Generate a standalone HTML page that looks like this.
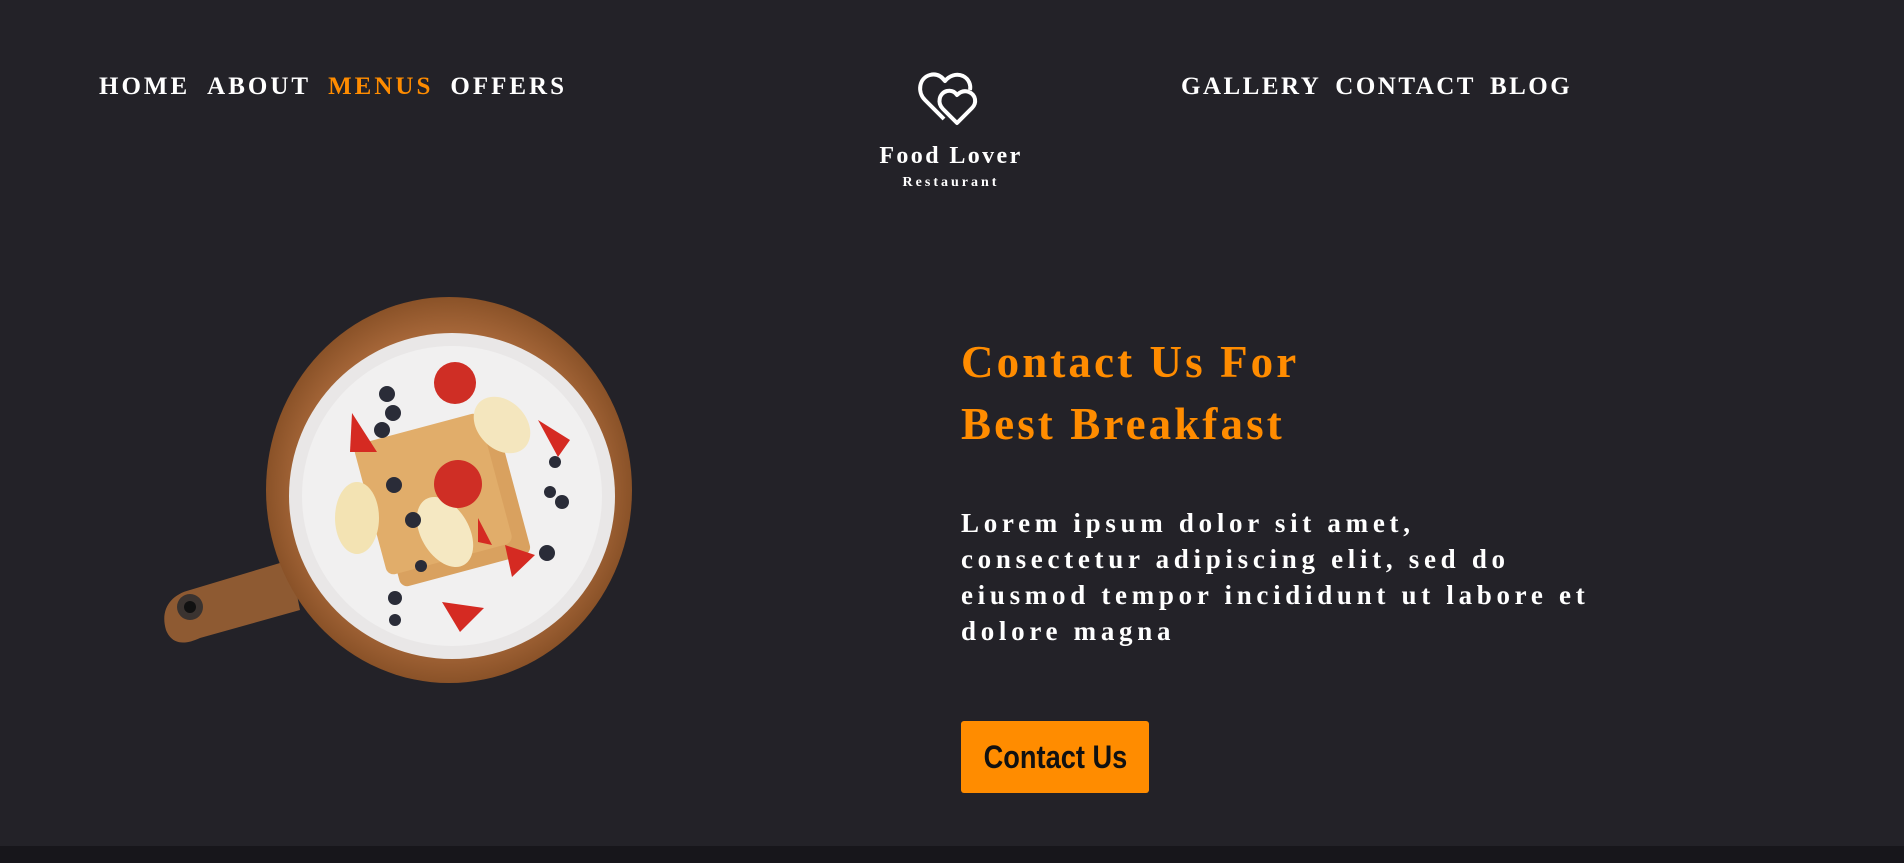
<!DOCTYPE html>
<html><head><meta charset="utf-8"><style>
html,body{margin:0;padding:0;}
body{width:1904px;height:863px;background:#232228;position:relative;overflow:hidden;font-family:"Liberation Serif",serif;}
.nav{position:absolute;top:73px;font-weight:bold;font-size:25px;color:#fff;letter-spacing:3px;white-space:nowrap;}
.nav span{margin-right:17px;}
.o{color:#ff8c00;}
h1{position:absolute;left:961px;top:331px;margin:0;font-weight:bold;font-size:45px;line-height:62px;color:#ff8c00;letter-spacing:3.1px;}
p{position:absolute;left:961px;top:505px;margin:0;white-space:nowrap;font-weight:bold;font-size:27px;line-height:36px;color:#fff;letter-spacing:4.7px;}
.btn{position:absolute;left:961px;top:721px;width:188px;height:72px;background:#ff8c00;border-radius:3px;color:#111;font-family:"Liberation Sans",sans-serif;font-weight:bold;font-size:32px;line-height:72px;text-align:center;}
.btn b{display:inline-block;transform:scaleX(0.85);}
.foot{position:absolute;left:0;top:846px;width:1904px;height:17px;background:#17161b;}
.logo1{position:absolute;left:850px;top:143px;width:202px;text-align:center;color:#fff;font-weight:bold;font-size:24px;letter-spacing:2.4px;}
.logo2{position:absolute;left:850px;top:175px;width:202px;text-align:center;color:#fff;font-weight:bold;font-size:14px;letter-spacing:3px;}
</style></head><body>
<div class="nav" style="left:99px"><span>HOME</span><span>ABOUT</span><span class="o">MENUS</span><span>OFFERS</span></div>
<div class="nav" style="left:1181px;letter-spacing:2.5px"><span style="margin-right:14px">GALLERY</span><span style="margin-right:14px">CONTACT</span><span>BLOG</span></div>
<svg style="position:absolute;left:915px;top:68px" width="70" height="60" viewBox="0 0 70 60">
<path d="M29 51 L10 32 C2 24 4 10 15 7 C22 5 27 9 30 13 C34 8 41 5 48 8 C54 11 56 17 55 22" fill="none" stroke="#fff" stroke-width="4" stroke-linejoin="round"/>
<path d="M42 61 L28 47 C22 41 24 31 32 29 C37 28 40 30 42 33 C45 30 49 28 54 30 C61 33 62 41 57 46 Z" transform="translate(0,-6)" fill="none" stroke="#fff" stroke-width="4" stroke-linejoin="round"/>
</svg>
<div class="logo1">Food Lover</div>
<div class="logo2">Restaurant</div>
<svg style="position:absolute;left:0;top:0" width="700" height="720">
<defs><radialGradient id="w" cx="50%" cy="50%" r="50%"><stop offset="0.8" stop-color="#a8683a"/><stop offset="1" stop-color="#8a5228"/></radialGradient></defs>
<path d="M290 560 L190 590 C170 595 160 610 166 630 C172 645 185 645 200 638 L300 610 Z" fill="#8e5a32"/>
<circle cx="190" cy="607" r="13" fill="#3a3330"/><circle cx="190" cy="607" r="6" fill="#111"/>
<ellipse cx="449" cy="490" rx="183" ry="193" fill="url(#w)"/>
<circle cx="452" cy="496" r="163" fill="#e9e7e7"/>
<circle cx="452" cy="496" r="150" fill="#f1f0f0"/>
<g transform="rotate(-15 440 500)">
<rect x="380" y="435" width="135" height="140" rx="8" fill="#d9a15f"/>
<rect x="370" y="425" width="130" height="135" rx="8" fill="#e1ad6a"/>
</g>
<ellipse cx="357" cy="518" rx="22" ry="36" fill="#f3e3b3"/>
<ellipse cx="445" cy="532" rx="24" ry="38" transform="rotate(-30 445 532)" fill="#f5e8c2"/>
<ellipse cx="502" cy="425" rx="24" ry="32" transform="rotate(-45 502 425)" fill="#f4e6be"/>
<circle cx="458" cy="484" r="24" fill="#cf2e25"/>
<circle cx="455" cy="383" r="21" fill="#cf2e25"/>
<path d="M352 413 L377 452 L350 452 Z" fill="#d52a22"/>
<path d="M538 420 L570 440 L558 457 Z" fill="#d52a22"/>
<path d="M478 518 L492 545 L478 542 Z" fill="#d52a22"/>
<path d="M505 545 L535 555 L512 577 Z" fill="#d52a22"/>
<path d="M442 602 L484 608 L460 632 Z" fill="#d52a22"/>
<g fill="#2a2c38"><circle cx="387" cy="394" r="8"/><circle cx="393" cy="413" r="8"/><circle cx="382" cy="430" r="8"/><circle cx="555" cy="462" r="6"/><circle cx="550" cy="492" r="6"/><circle cx="562" cy="502" r="7"/><circle cx="547" cy="553" r="8"/><circle cx="395" cy="598" r="7"/><circle cx="395" cy="620" r="6"/><circle cx="394" cy="485" r="8"/><circle cx="413" cy="520" r="8"/><circle cx="421" cy="566" r="6"/></g>
</svg>
<h1>Contact Us For<br>Best Breakfast</h1>
<p>Lorem ipsum dolor sit amet,<br>consectetur adipiscing elit, sed do<br>eiusmod tempor incididunt ut labore et<br>dolore magna</p>
<div class="btn"><b>Contact Us</b></div>
<div class="foot"></div>
</body></html>
